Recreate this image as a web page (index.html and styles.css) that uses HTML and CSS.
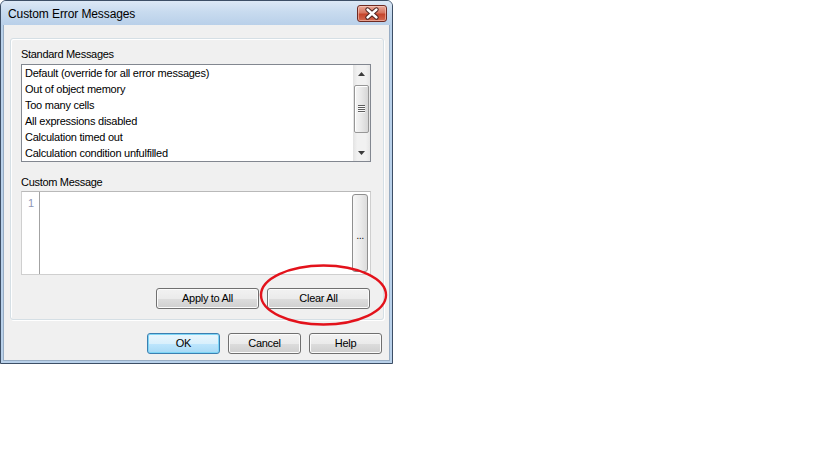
FILE: index.html
```html
<!DOCTYPE html>
<html>
  <head>
    <title>Custom Error Messages</title>
    <link rel="stylesheet" href="styles.css">
  </head>
  <body>
    <div class="window">
      <div class="titlebar">
        <span class="title">Custom Error Messages</span>
        <span class="close">
          <svg width="28" height="15" viewBox="0 0 28 15">
            <path d="M9.5 3.5 L18.5 11.5 M18.5 3.5 L9.5 11.5" stroke="#4a2320" stroke-width="4.4" stroke-linecap="round"/>
            <path d="M9.5 3.5 L18.5 11.5 M18.5 3.5 L9.5 11.5" stroke="#fff" stroke-width="2.4" stroke-linecap="round"/>
          </svg>
        </span>
      </div>
      <div class="client">
        <div class="group">
          <div class="label">Standard Messages</div>
          <div class="listbox">
            <ul class="items">
              <li>Default (override for all error messages)</li>
              <li>Out of object memory</li>
              <li>Too many cells</li>
              <li>All expressions disabled</li>
              <li>Calculation timed out</li>
              <li>Calculation condition unfulfilled</li>
            </ul>
            <div class="vscroll">
              <div class="arrow">
                <svg width="7" height="4" viewBox="0 0 7 4"><polygon points="3.5,0 7,4 0,4" fill="#3c3c3c"/></svg>
              </div>
              <div class="thumb"><span class="grip"></span></div>
              <div class="arrow arrow-down">
                <svg width="7" height="4" viewBox="0 0 7 4"><polygon points="0,0 7,0 3.5,4" fill="#3c3c3c"/></svg>
              </div>
            </div>
          </div>
          <div class="label label-custom">Custom Message</div>
          <div class="editor">
            <div class="gutter">1</div>
            <div class="text"></div>
            <div class="more">...</div>
          </div>
          <div class="actions">
            <button class="btn btn-wide">Apply to All</button>
            <button class="btn btn-wide">Clear All</button>
          </div>
        </div>
        <div class="footer">
          <button class="btn btn-default">OK</button>
          <button class="btn">Cancel</button>
          <button class="btn">Help</button>
        </div>
      </div>
      <svg class="mark" width="129" height="62" viewBox="0 0 129 62">
        <ellipse cx="64.5" cy="31" rx="62.5" ry="29.5" fill="none" stroke="#e3121b" stroke-width="2.4"/>
      </svg>
    </div>
  </body>
</html>
```

FILE: styles.css
```css
body {
  margin: 0;
  background: #fff;
  font-family: "Liberation Sans", Arial, sans-serif;
  font-size: 11px;
  color: #000;
}

.window {
  position: relative;
  width: 393px;
  height: 364px;
  box-sizing: border-box;
  border: 1px solid #3d4f66;
  border-radius: 6px 6px 0 0;
  background: #b9d1ea;
  padding: 0 2px 2px;
  display: flex;
  flex-direction: column;
}

.titlebar {
  height: 24px;
  margin: 0 -2px;
  padding: 0 5px 0 7px;
  box-sizing: border-box;
  border-radius: 5px 5px 0 0;
  background: linear-gradient(#dce8f5, #c8dbef 45%, #b9d0e9);
  display: flex;
  justify-content: space-between;
  align-items: flex-start;
}

.title {
  font-size: 12px;
  line-height: 18px;
  padding-top: 4px;
  letter-spacing: -0.1px;
}

.close {
  margin-top: 4px;
  width: 28px;
  height: 15px;
  border: 1px solid #6e2a22;
  border-radius: 3px;
  background: linear-gradient(#e9a99a, #d7755f 45%, #c5452c 55%, #d36a51);
  box-shadow: inset 0 0 0 1px rgba(255, 220, 210, 0.5);
  display: flex;
}

.client {
  flex: 1;
  background: #f0f0f0;
  border: 1px solid #98adc4;
  border-top: none;
  display: flex;
  flex-direction: column;
}

.group {
  margin: 13px 5px 0 6px;
  height: 282px;
  box-sizing: border-box;
  border: 1px solid #d5dfe5;
  border-radius: 3px;
  box-shadow: inset 1px 1px 0 #fff, 1px 1px 0 #fff;
  padding: 9px 12px 10px 10px;
  display: flex;
  flex-direction: column;
}

.label {
  line-height: 13px;
  margin-bottom: 3px;
  letter-spacing: -0.3px;
}

.label-custom {
  margin-top: 14px;
  margin-bottom: 2px;
}

.listbox {
  height: 98px;
  box-sizing: border-box;
  border: 1px solid #828790;
  background: #fff;
  display: flex;
}

.items {
  flex: 1;
  margin: 0;
  padding: 0 0 0 3px;
  list-style: none;
}

.items li {
  line-height: 16px;
  height: 16px;
  letter-spacing: -0.25px;
  white-space: nowrap;
}

.vscroll {
  width: 17px;
  background: linear-gradient(to right, #e3e3e3, #f1f1f1 25%, #f1f1f1 75%, #e6e6e6);
  display: flex;
  flex-direction: column;
  align-items: center;
}

.arrow {
  height: 17px;
  width: 17px;
  display: flex;
  align-items: center;
  justify-content: center;
}

.arrow-down {
  margin-top: auto;
}

.thumb {
  margin-top: 3px;
  width: 13px;
  height: 46px;
  border: 1px solid #979797;
  border-radius: 2px;
  background: linear-gradient(to right, #f6f6f6, #e8e8e8 50%, #d6d6d6);
  box-shadow: inset 1px 1px 0 #fff;
  display: flex;
  align-items: center;
  justify-content: center;
}

.grip {
  width: 7px;
  height: 8px;
  background: repeating-linear-gradient(#5e5e5e 0 1px, #fafafa 1px 2px);
}

.editor {
  height: 84px;
  box-sizing: border-box;
  border: 1px solid #cfcfcf;
  border-top-color: #b9b9b9;
  background: #fff;
  display: flex;
}

.gutter {
  width: 18px;
  box-sizing: border-box;
  border-right: 1px solid #a3a3a3;
  padding: 3px 5px 0 0;
  text-align: right;
  line-height: 16px;
  color: #8d97b4;
}

.text {
  flex: 1;
}

.more {
  width: 16px;
  margin: 2px 2px 2px 0;
  box-sizing: border-box;
  border: 1px solid #8f8f8f;
  border-radius: 3px;
  background: linear-gradient(to right, #f7f7f7, #ececec 50%, #dcdcdc);
  display: flex;
  align-items: center;
  justify-content: center;
  padding-top: 4px;
  letter-spacing: -0.5px;
  color: #222;
}

.actions {
  margin-top: 13px;
  margin-right: 1px;
  display: flex;
  justify-content: flex-end;
  gap: 8px;
}

.btn {
  width: 73px;
  height: 21px;
  padding: 0;
  box-sizing: border-box;
  border: 1px solid #707070;
  border-radius: 3px;
  background: linear-gradient(#f2f2f2, #ebebeb 50%, #dddddd 51%, #cfcfcf);
  box-shadow: inset 0 0 0 1px #fbfbfb;
  font-family: "Liberation Sans", Arial, sans-serif;
  font-size: 11px;
  line-height: 19px;
  letter-spacing: -0.3px;
  color: #000;
}

.btn-wide {
  width: 103px;
}

.btn-default {
  border-color: #3c7fb1;
  background: linear-gradient(#eaf6fd, #d9f0fc 50%, #bee6fd 51%, #a7d9f5);
  box-shadow: inset 0 0 0 1px #7fd6f6;
}

.footer {
  margin-top: 13px;
  padding-right: 7px;
  display: flex;
  justify-content: flex-end;
  gap: 8px;
}

.mark {
  position: absolute;
  left: 258px;
  top: 263px;
}
```
